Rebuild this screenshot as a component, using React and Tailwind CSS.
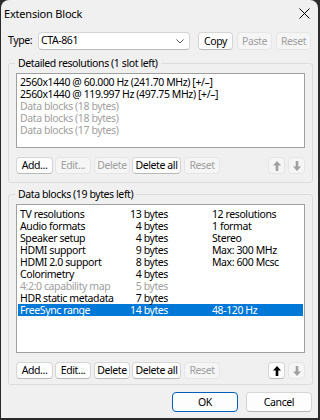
import React from 'react';
import clsx from 'clsx';

const Btn = ({ children, disabled, className }) => (
  <button
    className={clsx(
      'flex items-center justify-center rounded-[4px] border text-[10.5px] leading-none whitespace-nowrap',
      disabled
        ? 'bg-[#f5f5f5] border-[#e5e5e5] text-[#a0a0a0]'
        : 'bg-[#fdfdfd] border-[#d5d5d5] border-b-[#b9b9b9] text-black',
      className
    )}
  >
    {children}
  </button>
);

const Arrow = ({ down, disabled }) => (
  <button
    className={clsx(
      'flex items-center justify-center rounded-[4px] border w-[17px] h-[17px]',
      disabled ? 'bg-[#f5f5f5] border-[#e5e5e5]' : 'bg-[#fdfdfd] border-[#d5d5d5] border-b-[#b9b9b9]'
    )}
  >
    <svg width="8" height="10" viewBox="0 0 8 10" className={down ? 'rotate-180' : ''}>
      <path d="M4 0 L8 4.5 H5.3 V10 H2.7 V4.5 H0 Z" fill={disabled ? '#a0a0a0' : '#000'} />
    </svg>
  </button>
);

const resolutions = [
  ['2560x1440 @ 60.000 Hz (241.70 MHz) [+/–]', false],
  ['2560x1440 @ 119.997 Hz (497.75 MHz) [+/–]', false],
  ['Data blocks (18 bytes)', true],
  ['Data blocks (18 bytes)', true],
  ['Data blocks (17 bytes)', true],
];

const blocks = [
  ['TV resolutions', '13 bytes', '12 resolutions'],
  ['Audio formats', '4 bytes', '1 format'],
  ['Speaker setup', '4 bytes', 'Stereo'],
  ['HDMI support', '9 bytes', 'Max: 300 MHz'],
  ['HDMI 2.0 support', '8 bytes', 'Max: 600 Mcsc'],
  ['Colorimetry', '4 bytes', ''],
  ['4:2:0 capability map', '5 bytes', '', 'disabled'],
  ['HDR static metadata', '7 bytes', ''],
  ['FreeSync range', '14 bytes', '48-120 Hz', 'selected'],
];

const ButtonRow = ({ editOn, deleteOn, upOn }) => (
  <div className="flex items-center h-[17px]">
    <Btn className="w-[37px] h-[17px]">Add...</Btn>
    <Btn disabled={!editOn} className="w-[36px] h-[17px] ml-[2px]">Edit...</Btn>
    <Btn disabled={!deleteOn} className="w-[36px] h-[17px] ml-[3px]">Delete</Btn>
    <Btn className="w-[49px] h-[17px] ml-[2px]">Delete all</Btn>
    <Btn disabled className="w-[36px] h-[17px] ml-[3px]">Reset</Btn>
    <div className="flex-1" />
    <Arrow disabled={!upOn} />
    <div className="w-[3px]" />
    <Arrow down disabled />
  </div>
);

const Group = ({ title, children, className }) => (
  <fieldset className={clsx('border border-[#dcdcdc] rounded-[3px] ml-[7px] mr-[5px] px-[7px]', className)}>
    <legend className="ml-[-1px] px-[3px] text-[10.5px] leading-[14px] text-black">{title}</legend>
    {children}
  </fieldset>
);

export default function App() {
  return (
    <div className="w-[320px] h-[420px] bg-[#2b2b2b] font-['Segoe_UI','Noto_Sans',sans-serif] text-[10.5px] tracking-[-0.4px] text-black">
      <div className="ml-px w-[317px] h-[418px] bg-[#f0f0f0] rounded-t-[8px] flex flex-col">
        {/* title bar */}
        <div className="h-[27px] flex items-center pl-[3px] pr-[8px]">
          <span className="text-[11px] tracking-[-0.2px] leading-none">Extension Block</span>
          <div className="flex-1" />
          <svg width="11" height="11" viewBox="0 0 11 11">
            <path d="M0.5 0.5 L10.5 10.5 M10.5 0.5 L0.5 10.5" stroke="#000" strokeWidth="1" />
          </svg>
        </div>

        {/* type row */}
        <div className="flex items-center h-[18px] mt-[5px] pl-[7px]">
          <span className="w-[30px]">Type:</span>
          <div className="w-[152px] h-[18px] bg-white border border-[#d5d5d5] border-b-[#b9b9b9] rounded-[4px] flex items-center pl-[2px] pr-[5px]">
            <span className="flex-1">CTA-861</span>
            <svg width="8" height="5" viewBox="0 0 8 5">
              <path d="M0.5 0.5 L4 4 L7.5 0.5" fill="none" stroke="#555" strokeWidth="1" />
            </svg>
          </div>
          <Btn className="w-[35px] h-[18px] ml-[8px]">Copy</Btn>
          <Btn disabled className="w-[35px] h-[18px] ml-[4px]">Paste</Btn>
          <Btn disabled className="w-[35px] h-[18px] ml-[4px]">Reset</Btn>
        </div>

        {/* detailed resolutions */}
        <Group title="Detailed resolutions (1 slot left)" className="mt-[6px] pb-[8px]">
          <div className="mt-[3px] h-[75px] bg-white border border-[#a0a0a0] pt-[2px] pl-[3px]">
            {resolutions.map(([t, dis], i) => (
              <div key={i} className={clsx('h-[12px] leading-[12px] whitespace-nowrap', dis && 'text-[#a0a0a0]')}>
                {t}
              </div>
            ))}
          </div>
          <div className="mt-[9px]">
            <ButtonRow />
          </div>
        </Group>

        {/* data blocks */}
        <Group title="Data blocks (19 bytes left)" className="mt-[4px] pb-[5px]">
          <div className="mt-[3px] h-[149px] bg-white border border-[#a0a0a0] pt-[3px] px-px">
            {blocks.map(([name, size, desc, state], i) => (
              <div
                key={i}
                className={clsx(
                  'h-[12px] leading-[12px] flex whitespace-nowrap pl-[2px]',
                  state === 'selected' && 'bg-[#0078d7] text-white',
                  state === 'disabled' && 'text-[#a0a0a0]'
                )}
              >
                <span className="w-[100px]">{name}</span>
                <span className="w-[48px] text-right">{size}</span>
                <span className="ml-[44px]">{desc}</span>
              </div>
            ))}
          </div>
          <div className="mt-[9px]">
            <ButtonRow editOn deleteOn upOn />
          </div>
        </Group>

        {/* dialog buttons */}
        <div className="flex justify-end mt-[7px] pr-[6px]">
          <Btn className="w-[66px] h-[20px] !border-[#005fb8] border-[1px]">OK</Btn>
          <Btn className="w-[66px] h-[20px] ml-[8px]">Cancel</Btn>
        </div>
      </div>
    </div>
  );
}
